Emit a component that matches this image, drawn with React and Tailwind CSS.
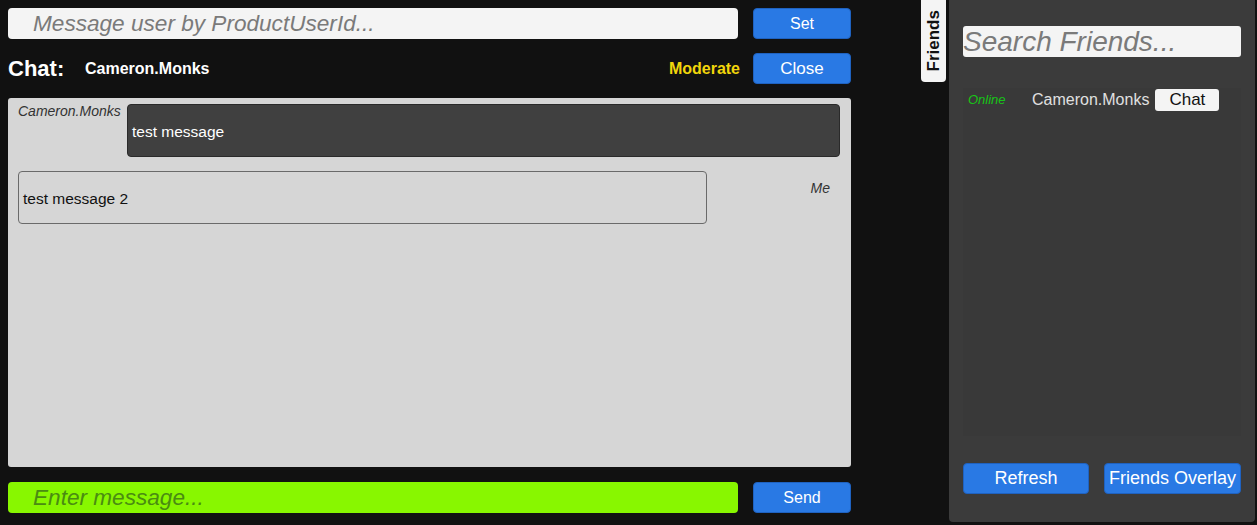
import React from "react";

function BlueButton({ children, className = "" }) {
  return (
    <button
      className={
        "flex items-center justify-center rounded-[4px] border border-[#1f62c0] bg-[#2979e4] text-white " +
        className
      }
    >
      {children}
    </button>
  );
}

export default function App() {
  return (
    <div
      className="flex h-[525px] w-[1257px] overflow-hidden bg-[#111111]"
      style={{ fontFamily: '"Liberation Sans", Arial, sans-serif' }}
    >
      {/* Chat column */}
      <div className="flex w-[851px] shrink-0 flex-col pl-2 pt-2">
        <div className="flex h-[31px] gap-[15px]">
          <div className="flex flex-1 items-center rounded-[4px] bg-[#f4f4f4] pl-[25px]">
            <span className="text-[22.6px] italic text-[#7a7a7a]">
              Message user by ProductUserId...
            </span>
          </div>
          <BlueButton className="w-[98px] text-[16px]">Set</BlueButton>
        </div>

        <div className="mt-[14px] flex h-[31px] items-center">
          <span className="w-[77px] pl-[-1px] text-[22px] font-bold text-white">Chat:</span>
          <span className="text-[16px] font-bold text-white">Cameron.Monks</span>
          <span className="ml-auto text-[16px] font-bold text-[#f2d60b]">Moderate</span>
          <BlueButton className="ml-[13px] h-[31px] w-[98px] text-[17px]">Close</BlueButton>
        </div>

        <div className="mt-[14px] flex h-[369px] flex-col rounded-[3px] bg-[#d6d6d6] pl-[10px] pr-[11px] pt-[6px]">
          <div className="flex">
            <span className="w-[109px] text-[14px] italic leading-[15px] text-[#333]">
              Cameron.Monks
            </span>
            <div className="flex h-[53px] flex-1 items-center rounded-[4px] border border-[#2a2a2a] bg-[#404040] pl-[4px] pt-[2px]">
              <span className="text-[15.5px] text-white">test message</span>
            </div>
          </div>
          <div className="mt-[14px] flex">
            <div className="flex h-[53px] w-[689px] items-center rounded-[4px] border border-[#6a6a6a] pl-[4px] pt-[2px]">
              <span className="text-[15.5px] text-[#111]">test message 2</span>
            </div>
            <div className="flex-1 pr-[10px] pt-[7px] text-right text-[14px] italic text-[#333]">
              Me
            </div>
          </div>
        </div>

        <div className="mt-[15px] flex h-[31px] gap-[15px]">
          <div className="flex flex-1 items-center rounded-[4px] bg-[#88f700] pl-[25px]">
            <span className="text-[22.6px] italic text-[#4a8c12]">Enter message...</span>
          </div>
          <BlueButton className="w-[98px] text-[16px]">Send</BlueButton>
        </div>
      </div>

      {/* Friends tab */}
      <div className="ml-[70px] flex h-[82px] w-[25px] shrink-0 items-center justify-center rounded-b-[4px] bg-[#f4f4f4]">
        <span className="-rotate-90 whitespace-nowrap text-[17px] font-bold text-[#111]">
          Friends
        </span>
      </div>

      {/* Friends panel */}
      <div className="ml-[3px] flex h-[522px] w-[306px] shrink-0 flex-col rounded-b-[4px] bg-[#3b3b3b] px-[14px] pt-[26px]">
        <div className="flex h-[31px] items-center rounded-[3px] bg-[#f4f4f4]">
          <span className="text-[28px] italic leading-none text-[#7a7a7a]">Search Friends...</span>
        </div>
        <div className="mt-[31px] h-[348px] bg-[#393939] pt-[1px]">
          <div className="flex h-[22px] items-center">
            <span className="ml-[5px] w-[64px] text-[13px] italic text-[#17c417]">Online</span>
            <span className="text-[16px] text-[#e0e0e0]">Cameron.Monks</span>
            <button className="ml-[6px] flex h-[22px] w-[64px] items-center justify-center rounded-[3px] bg-[#f4f4f4] text-[17px] text-[#111]">
              Chat
            </button>
          </div>
        </div>
        <div className="mt-[27px] flex h-[31px] justify-between">
          <BlueButton className="w-[126px] text-[18px]">Refresh</BlueButton>
          <BlueButton className="w-[137px] text-[18px]">Friends Overlay</BlueButton>
        </div>
      </div>
    </div>
  );
}
